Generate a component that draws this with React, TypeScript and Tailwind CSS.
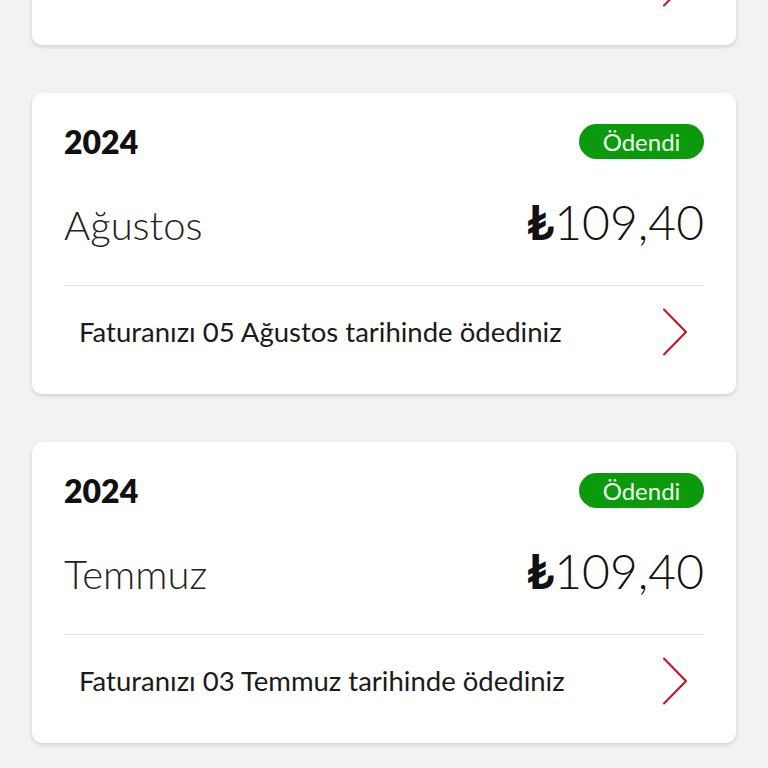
import React from 'react'

interface Bill {
  year: string
  month: string
  amount: string
  note: string
}

const bills: Bill[] = [
  { year: '2024', month: 'Eylül',   amount: '109,40', note: 'Faturanızı 04 Eylül tarihinde ödediniz' },
  { year: '2024', month: 'Ağustos', amount: '109,40', note: 'Faturanızı 05 Ağustos tarihinde ödediniz' },
  { year: '2024', month: 'Temmuz',  amount: '109,40', note: 'Faturanızı 03 Temmuz tarihinde ödediniz' },
]

function Chevron() {
  return (
    <svg width="26" height="48" viewBox="0 0 26 48" fill="none" className="shrink-0">
      <path d="M2 1.5 L24 24 L2 46.5" stroke="#c8111c" strokeWidth="2" strokeLinecap="round" strokeLinejoin="round" />
    </svg>
  )
}

function BillCard({ bill }: { bill: Bill }) {
  return (
    <div className="bg-white rounded-[10px] shadow-[0_2px_4px_rgba(0,0,0,0.14)] px-8 pt-[31px] pb-[17px]">
      {/* Header */}
      <div className="flex items-center justify-between h-[35px]">
        <span className="text-[32px] font-extrabold leading-none text-[#111]">{bill.year}</span>
        <span className="bg-[#0b9a0b] text-[#f2fff0] text-[24px] leading-none rounded-full h-[35px] w-[125px] flex items-center justify-center">
          Ödendi
        </span>
      </div>

      {/* Month + amount */}
      <div className="flex items-baseline justify-between mt-[39px] h-[52px]">
        <span className="text-[40px] font-light leading-none text-[#222]">{bill.month}</span>
        <span className="text-[48px] font-light leading-none text-[#111]">
          <span className="font-bold">₺</span>{bill.amount}
        </span>
      </div>

      {/* Footer */}
      <div className="border-t border-[#e5e5e5] mt-[35px] flex items-center justify-between pl-[15px] pr-[16px] h-[92px]">
        <span className="text-[27.5px] leading-none text-[#1a1a1a]">{bill.note}</span>
        <Chevron />
      </div>
    </div>
  )
}

export default function App() {
  return (
    <div className="w-[768px] h-[768px] overflow-hidden bg-[#f2f2f2]" style={{ fontFamily: 'Lato, "Open Sans", sans-serif' }}>
      <div className="flex flex-col gap-[48px] px-8 -mt-[256px]">
        {bills.map(b => (
          <BillCard key={b.month} bill={b} />
        ))}
      </div>
    </div>
  )
}
